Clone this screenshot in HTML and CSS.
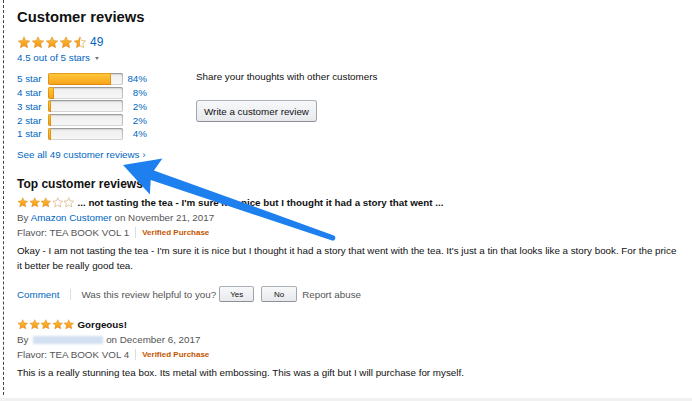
FILE: index.html
```html
<!DOCTYPE html>
<html lang="en">
  <head>
    <meta charset="UTF-8" />
    <meta name="viewport" content="width=device-width, initial-scale=1.0" />
    <title>Customer reviews</title>
    <link rel="stylesheet" href="styles.css">
  </head>
  <body>
    <svg class="defs" width="0" height="0" aria-hidden="true">
      <defs>
        <linearGradient id="gold" x1="0" y1="0" x2="0" y2="1">
          <stop offset="0" stop-color="#ffc53d" />
          <stop offset="1" stop-color="#f39312" />
        </linearGradient>
        <linearGradient id="halfgold" x1="0" y1="0" x2="1" y2="0">
          <stop offset="0.5" stop-color="#f8a420" />
          <stop offset="0.5" stop-color="#ffffff" />
        </linearGradient>
        <symbol id="star" viewBox="0 0 24 24">
          <path d="M12 1.6l3.1 6.8 7.4.8-5.5 5 1.6 7.3L12 17.8l-6.6 3.7 1.6-7.3-5.5-5 7.4-.8z" />
        </symbol>
      </defs>
    </svg>

    <div class="page">
      <div class="inner">
        <div class="top">
          <div class="summary">
            <h2 class="title">Customer reviews</h2>
            <div class="rating">
              <span class="stars big">
                <svg class="star full"><use href="#star" /></svg>
                <svg class="star full"><use href="#star" /></svg>
                <svg class="star full"><use href="#star" /></svg>
                <svg class="star full"><use href="#star" /></svg>
                <svg class="star half"><use href="#star" /></svg>
              </span>
              <a class="count">49</a>
            </div>
            <div class="outof"><a>4.5 out of 5 stars</a><span class="caret"></span></div>

            <div class="histo">
              <a>5 star</a><span class="meter"><span class="fill" style="width: 84%"></span></span><a class="pct">84%</a>
              <a>4 star</a><span class="meter"><span class="fill" style="width: 8%"></span></span><a class="pct">8%</a>
              <a>3 star</a><span class="meter"><span class="fill" style="width: 2%"></span></span><a class="pct">2%</a>
              <a>2 star</a><span class="meter"><span class="fill" style="width: 2%"></span></span><a class="pct">2%</a>
              <a>1 star</a><span class="meter"><span class="fill" style="width: 4%"></span></span><a class="pct">4%</a>
            </div>

            <div class="seeall"><a>See all 49 customer reviews ›</a></div>
          </div>

          <div class="share">
            <div class="share-text">Share your thoughts with other customers</div>
            <button class="btn write">Write a customer review</button>
          </div>
        </div>

        <h3 class="subtitle">Top customer reviews</h3>

        <div class="review">
          <div class="rtitle">
            <span class="stars small">
              <svg class="star full"><use href="#star" /></svg>
              <svg class="star full"><use href="#star" /></svg>
              <svg class="star full"><use href="#star" /></svg>
              <svg class="star empty"><use href="#star" /></svg>
              <svg class="star empty"><use href="#star" /></svg>
            </span>
            <b>... not tasting the tea - I'm sure it is nice but I thought it had a story that went ...</b>
          </div>
          <div class="by">By <a>Amazon Customer</a> on November 21, 2017</div>
          <div class="flavor">Flavor: TEA BOOK VOL 1<span class="sep"></span><span class="verified">Verified Purchase</span></div>
          <p class="body">Okay - I am not tasting the tea - I'm sure it is nice but I thought it had a story that went with the tea. It's just a tin that looks like a story book. For the price it better be really good tea.</p>
          <div class="actions">
            <a>Comment</a><span class="sep wide"></span>
            <span class="helpful">Was this review helpful to you?</span>
            <button class="btn small yes">Yes</button>
            <button class="btn small no">No</button>
            <span class="report">Report abuse</span>
          </div>
        </div>

        <div class="review">
          <div class="rtitle">
            <span class="stars small">
              <svg class="star full"><use href="#star" /></svg>
              <svg class="star full"><use href="#star" /></svg>
              <svg class="star full"><use href="#star" /></svg>
              <svg class="star full"><use href="#star" /></svg>
              <svg class="star full"><use href="#star" /></svg>
            </span>
            <b>Gorgeous!</b>
          </div>
          <div class="by">By <span class="blurred"></span>on December 6, 2017</div>
          <div class="flavor">Flavor: TEA BOOK VOL 4<span class="sep"></span><span class="verified">Verified Purchase</span></div>
          <p class="body">This is a really stunning tea box. Its metal with embossing. This was a gift but I will purchase for myself.</p>
        </div>
      </div>

      <svg class="arrow" width="692" height="401" viewBox="0 0 692 401" aria-hidden="true">
        <path d="M123 165 L162.4 158.5 L153.9 170.5 L333.9 235.4 A2.8 2.8 0 0 1 332.1 240.6 L150.7 179.9 L149.9 194.5 Z" />
      </svg>
    </div>
  </body>
</html>
```

FILE: styles.css
```css
* {
  box-sizing: border-box;
}
body {
  margin: 0;
  background-color: #f1f1f1;
  font-family: "Liberation Sans", Arial, sans-serif;
  font-size: 9.8px;
  color: #111;
}
a {
  color: #0066c0;
  text-decoration: none;
}
.defs {
  position: absolute;
  width: 0;
  height: 0;
}
.page {
  position: relative;
  height: 398px;
  background: white;
  padding-left: 3px;
}
.inner {
  height: 395px;
  border-left: 1px dashed #444;
  padding: 8px 0 0 13px;
}

/* summary */
.top {
  display: flex;
}
.summary {
  width: 179px;
}
.title {
  margin: 0;
  font-size: 14.8px;
  line-height: 18px;
  font-weight: bold;
}
.rating {
  display: flex;
  align-items: center;
  height: 14px;
  margin-top: 9px;
}
.stars {
  display: inline-flex;
}
.star {
  stroke-linejoin: round;
}
.stars.big .star {
  width: 14px;
  height: 13px;
}
.stars.small .star {
  width: 11.5px;
  height: 11px;
}
.star.full {
  fill: url(#gold);
  stroke: #d9841a;
  stroke-width: 1;
}
.star.half {
  fill: url(#halfgold);
  stroke: #d9841a;
  stroke-width: 1;
}
.star.empty {
  fill: #fff;
  stroke: #c99a5c;
  stroke-width: 1.2;
}
.count {
  margin-left: 3px;
  font-size: 12px;
}
.outof {
  margin-top: 2px;
  line-height: 14px;
}
.caret {
  display: inline-block;
  margin-left: 5px;
  vertical-align: middle;
  border-left: 2.5px solid transparent;
  border-right: 2.5px solid transparent;
  border-top: 3px solid #777;
}
.histo {
  display: grid;
  grid-template-columns: 31px 75px 24px;
  grid-auto-rows: 13.75px;
  align-items: center;
  margin-top: 7px;
}
.meter {
  display: block;
  height: 12px;
  border-radius: 2px;
  background: linear-gradient(to bottom, #eee, #f7f7f7);
  box-shadow: inset 0 1px 2px rgba(0, 0, 0, 0.35), inset 0 0 0 1px rgba(0, 0, 0, 0.12);
  overflow: hidden;
}
.fill {
  display: block;
  height: 100%;
  min-width: 3px;
  border-radius: 2px 0 0 2px;
  background: linear-gradient(to bottom, #ffcb3a, #f7a11a);
  box-shadow: inset 0 0 0 1px rgba(190, 110, 0, 0.45);
}
.pct {
  text-align: right;
}
.seeall {
  margin-top: 7px;
  line-height: 14px;
}
.share {
  padding-top: 62px;
}
.share-text {
  line-height: 14px;
}
.btn {
  font-family: inherit;
  color: #111;
  background: linear-gradient(to bottom, #f7f8fa, #e7e9ec);
  border: 1px solid #adb1b8;
  border-color: #adb1b8 #a2a6ac #8d9096;
  border-radius: 3px;
  cursor: pointer;
}
.btn.write {
  margin-top: 16px;
  height: 22px;
  width: 121px;
  padding: 0;
  font-size: 9.8px;
}

/* reviews */
.subtitle {
  margin: 14px 0 0;
  font-size: 12px;
  line-height: 16px;
  font-weight: bold;
}
.review {
  margin-top: 3px;
}
.rtitle {
  display: flex;
  align-items: center;
  line-height: 15px;
}
.rtitle b {
  margin-left: 3px;
}
.by,
.flavor {
  line-height: 15px;
  color: #555;
}
.flavor {
  display: flex;
  align-items: center;
}
.sep {
  display: inline-block;
  width: 1px;
  height: 11px;
  background: #ddd;
  margin: 0 6px;
}
.sep.wide {
  margin: 0 10px 0 11px;
}
.verified {
  color: #c45500;
  font-weight: bold;
  font-size: 8px;
}
.blurred {
  display: inline-block;
  width: 70px;
  height: 8px;
  margin: 0 3px 0 2px;
  vertical-align: middle;
  background: #d3e0f2;
  filter: blur(1.2px);
}
.body {
  margin: 3px 0 0;
  line-height: 15px;
  width: 666px;
}
.actions {
  display: flex;
  align-items: center;
  height: 16px;
  margin: 13.5px 0 14.5px;
  color: #555;
}
.btn.small {
  height: 16px;
  padding: 0;
  font-size: 8px;
  border-radius: 2px;
}
.yes {
  width: 35px;
  margin-left: 3px;
}
.no {
  width: 36px;
  margin-left: 7px;
}
.report {
  margin-left: 5px;
}

.arrow {
  position: absolute;
  top: 0;
  left: 0;
  pointer-events: none;
}
.arrow path {
  fill: #1e80ee;
}
```
